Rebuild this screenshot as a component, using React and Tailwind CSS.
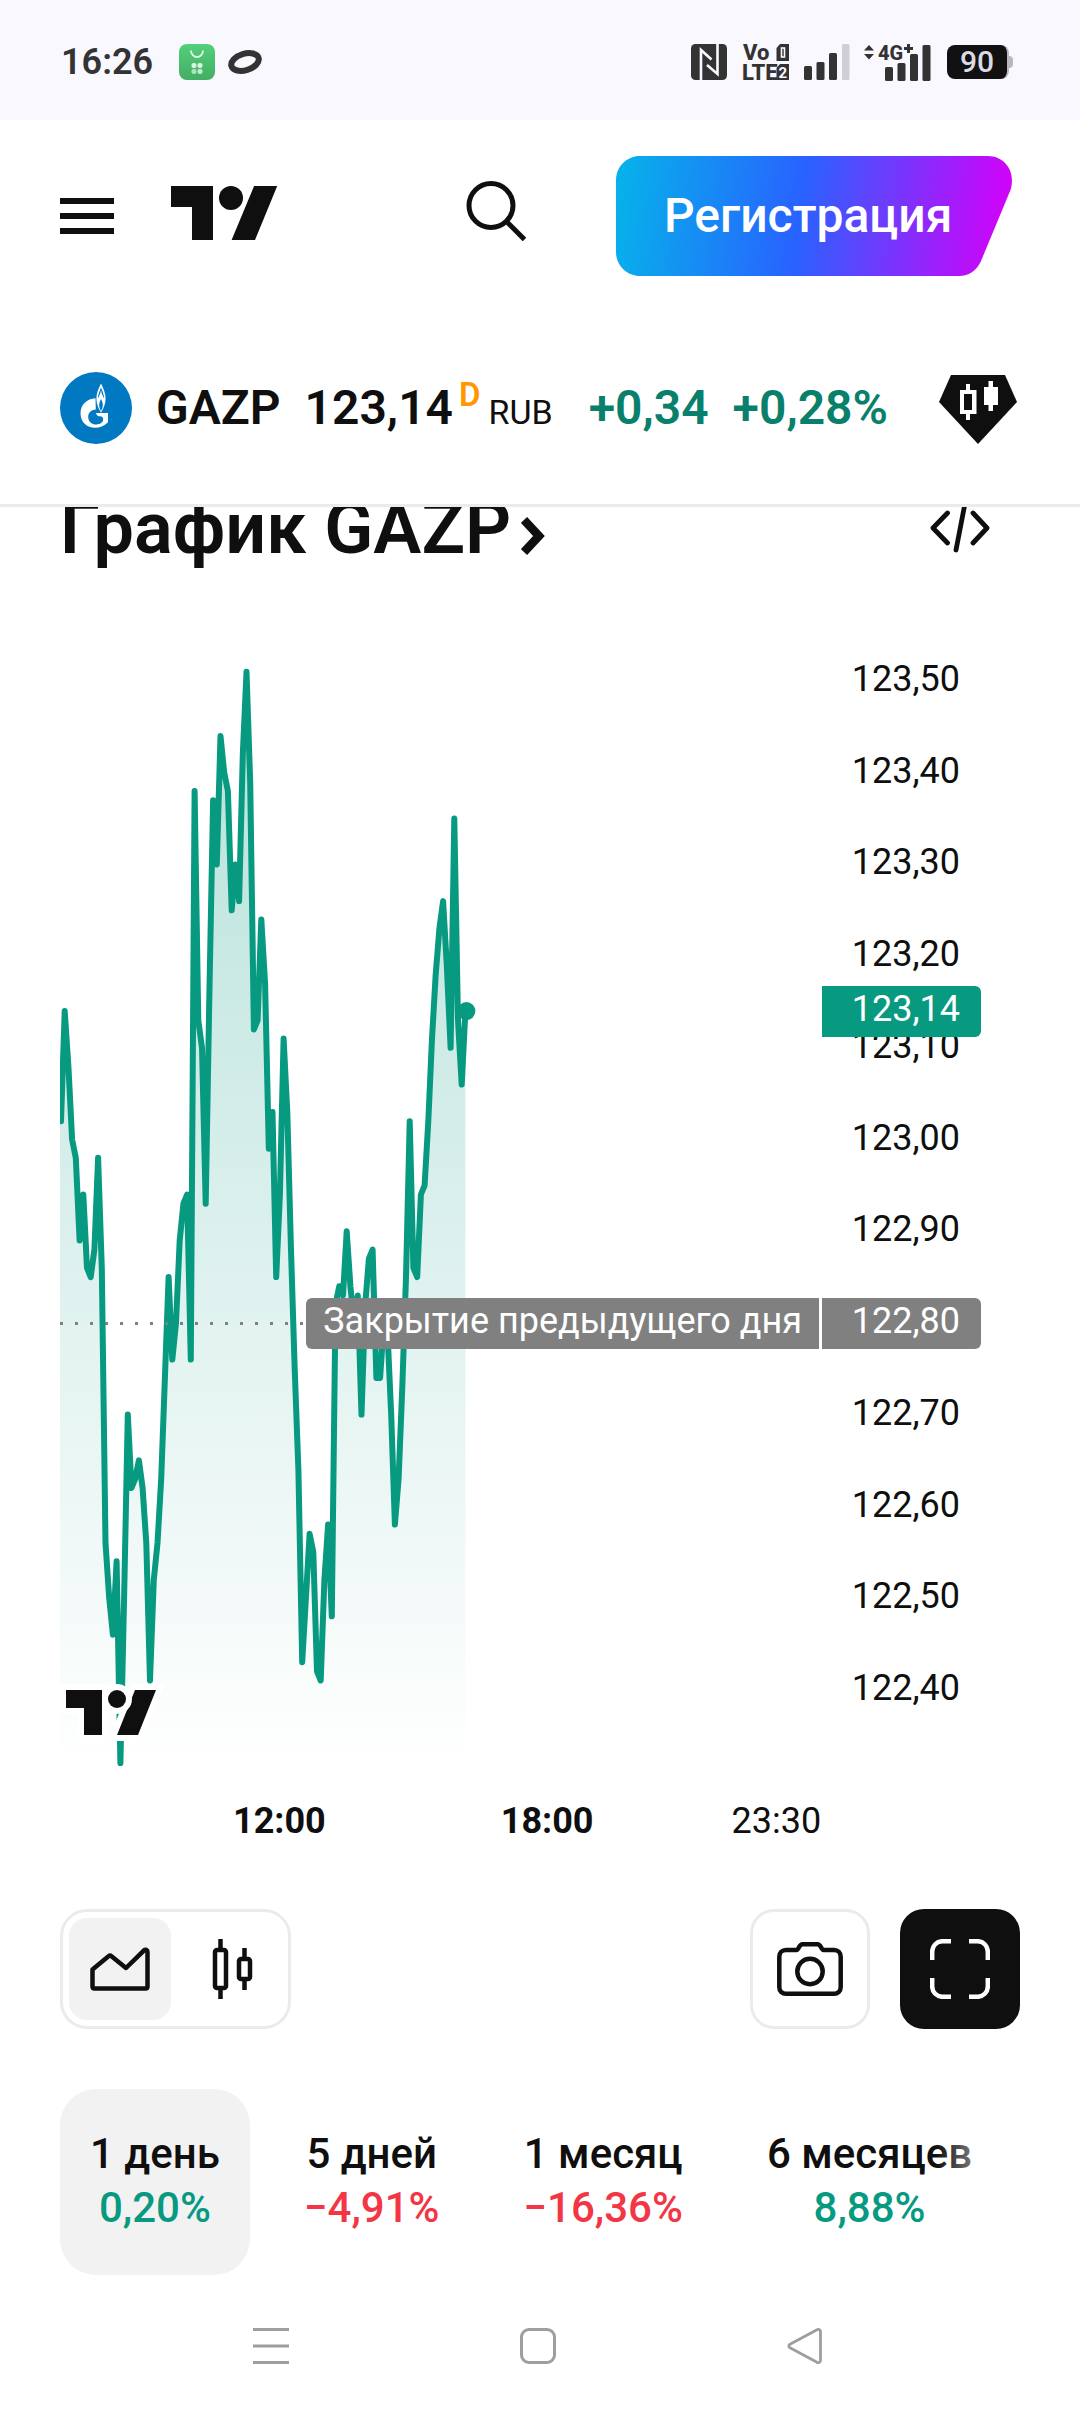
const prices = [
  123.02, 123.14, 123.08, 123.0, 122.98, 122.89, 122.94, 122.86, 122.85, 122.88,
  122.98, 122.86, 122.56, 122.5, 122.46, 122.54, 122.32, 122.5, 122.7, 122.62,
  122.63, 122.65, 122.62, 122.56, 122.41, 122.52, 122.56, 122.63, 122.74, 122.85,
  122.76, 122.8, 122.89, 122.93, 122.94, 122.76, 123.38, 123.13, 123.1, 122.93,
  123.16, 123.37, 123.3, 123.44, 123.4, 123.38, 123.25, 123.3, 123.26, 123.42,
  123.51, 123.39, 123.12, 123.13, 123.24, 123.17, 122.99, 123.03, 122.85, 122.94,
  123.11, 123.03, 122.88, 122.75, 122.64, 122.43, 122.5, 122.57, 122.55, 122.42,
  122.41, 122.52, 122.58, 122.48, 122.82, 122.84, 122.83, 122.9, 122.84, 122.8,
  122.83, 122.7, 122.82, 122.87, 122.88, 122.74, 122.74, 122.8, 122.79, 122.7,
  122.58, 122.63, 122.73, 122.85, 123.02, 122.86, 122.85, 122.94, 122.95, 123.02,
  123.11, 123.18, 123.23, 123.26, 123.19, 123.1, 123.35, 123.13, 123.06, 123.14,
];

const priceTicks = [
  "123,50", "123,40", "123,30", "123,20", "123,10", "123,00",
  "122,90", "122,80", "122,70", "122,60", "122,50", "122,40",
];

const ranges = [
  { id: "1d", label: "1 день", change: "0,20%", up: true },
  { id: "5d", label: "5 дней", change: "−4,91%", up: false },
  { id: "1m", label: "1 месяц", change: "−16,36%", up: false },
  { id: "6m", label: "6 месяцев", change: "8,88%", up: true },
];

const STEP = 3.71;
const toX = (i) => 1 + i * STEP;
const toY = (price) => 50 + (123.5 - price) * 917;

function StatusBar() {
  return (
    <div className="flex h-[120px] items-center bg-[#f9f8ff] pt-1 pr-[67px] pl-[61px] text-[#333]">
      <span className="text-[36px] leading-[36px] font-semibold">16:26</span>
      <svg className="ml-[26px]" width="36" height="36" viewBox="0 0 36 36">
        <defs>
          <linearGradient id="bag" x1="0" y1="0" x2="0" y2="1">
            <stop offset="0" stopColor="#54cf7b" />
            <stop offset="1" stopColor="#43ae62" />
          </linearGradient>
        </defs>
        <rect width="36" height="36" rx="8" fill="url(#bag)" />
        <path d="M12 6.5a6 6.5 0 0 0 12 0" fill="none" stroke="#e4fbe9" strokeWidth="1.8" />
        <g fill="#d9f7e0">
          <rect x="12.500" y="19" width="5" height="5" rx="2" />
          <rect x="18.500" y="19" width="5" height="5" rx="2" />
          <rect x="12.500" y="25" width="5" height="5" rx="2" opacity=".7" />
          <rect x="18.500" y="25" width="5" height="5" rx="2" opacity=".85" />
        </g>
      </svg>
      <svg className="ml-3" width="36" height="36" viewBox="0 0 36 36">
        <ellipse cx="18" cy="18" rx="14.200" ry="8.200" transform="rotate(-17 18 18)" fill="none" stroke="#333" strokeWidth="6" />
      </svg>
      <svg className="ml-auto" width="36" height="36" viewBox="0 0 36 36">
        <rect width="36" height="36" rx="4.500" fill="#333" />
        <path d="M10 36V6l10.500 9.500M26.500 0v30L16 21" fill="none" stroke="#f9f8ff" strokeWidth="2.600" />
      </svg>
      <svg className="ml-4 overflow-visible" width="46" height="36" viewBox="0 0 46 36" fontFamily="Roboto, sans-serif" fontWeight="800" fill="#333">
        <text x="0" y="16" fontSize="22">Vo</text>
        <text x="-1" y="36" fontSize="22">LTE</text>
        <path d="M37 0h9v17H33.500V4z" />
        <path d="M37 20h9v16H33.500V24z" />
        <rect x="38.500" y="4" width="3" height="9" fill="none" stroke="#f9f8ff" strokeWidth="1.600" />
        <text x="35.500" y="33.500" fontSize="15" fontWeight="700" fill="#f9f8ff">2</text>
      </svg>
      <svg className="ml-[15px]" width="46" height="36" viewBox="0 0 46 36" fill="#333">
        <rect y="22" width="8" height="14" rx="1.500" />
        <rect x="12.500" y="18" width="8" height="18" rx="1.500" />
        <rect x="25" y="9" width="8" height="27" rx="1.500" />
        <rect x="38" width="7.500" height="36" rx="1.500" fill="#d2ced6" />
      </svg>
      <svg className="ml-[14px] overflow-visible" width="67" height="37" viewBox="0 -1 67 37" fill="#333">
        <path d="M0 5.500 5 0l5 5.500zM0 9h10l-5 5.500z" />
        <text x="14" y="15" fontSize="20" fontWeight="800" fontFamily="Roboto, sans-serif">4G</text>
        <path d="M40 3.500h9M44.500-1v9" stroke="#333" strokeWidth="3" />
        <rect x="21" y="22" width="8" height="14" rx="1.500" />
        <rect x="33.500" y="18" width="8" height="18" rx="1.500" />
        <rect x="46" y="9" width="8" height="27" rx="1.500" />
        <rect x="58.500" width="8" height="36" rx="1.500" />
      </svg>
      <div className="ml-4 flex items-center">
        <span className="h-[34px] w-[62px] rounded-lg border-r-2 border-[#b9b6be] bg-[#111] text-center text-[30px] leading-[34px] font-medium text-[#dcdae2]">90</span>
        <span className="h-3 w-1 rounded-r-sm bg-[#b9b6be]" />
      </div>
    </div>
  );
}

function BrandLogo() {
  return (
    <svg width="108" height="54" viewBox="0 4 36 18" fill="#0f0f0f">
      <path d="M14 22H7V11H0V4h14v18zM28 22h-7.800L27.700 4h7.700L28 22z" />
      <circle cx="20" cy="8" r="4" />
    </svg>
  );
}

function SiteHeader() {
  return (
    <div className="flex h-[192px] items-center pr-[68px] pl-[60px]">
      <button type="button" aria-label="Меню" className="flex w-[54px] flex-col gap-[9px]">
        <span className="h-[6px] bg-[#0f0f0f]" />
        <span className="h-[6px] bg-[#0f0f0f]" />
        <span className="h-[6px] bg-[#0f0f0f]" />
      </button>
      <a href="#" aria-label="TradingView" className="-mt-[6px] ml-[57px]">
        <BrandLogo />
      </a>
      <button type="button" aria-label="Поиск" className="-mt-[10px] mr-[90px] ml-auto">
        <svg width="60" height="60" viewBox="0 0 60 60" fill="none" stroke="#0f0f0f" strokeWidth="5">
          <circle cx="25" cy="24.500" r="22" />
          <path d="m41 41 17.500 17.500" />
        </svg>
      </button>
      <button type="button" className="relative h-[120px] w-[396px] pl-[48px] text-left text-[48px] font-medium text-white">
        <svg className="absolute inset-0" width="396" height="120" viewBox="0 0 396 120">
          <defs>
            <linearGradient id="cta" gradientUnits="userSpaceOnUse" x1="0" y1="34" x2="392" y2="86">
              <stop offset="0" stopColor="#06b2ea" />
              <stop offset=".47" stopColor="#2962ff" />
              <stop offset="1" stopColor="#d500f9" />
            </linearGradient>
          </defs>
          <path d="M24 0h348c17 0 28 16 22.500 34L365 105c-4 9-12 15-22 15H24C10.700 120 0 109.300 0 96V24C0 10.700 10.700 0 24 0z" fill="url(#cta)" />
        </svg>
        <span className="relative">Регистрация</span>
      </button>
    </div>
  );
}

function GazpromLogo() {
  return (
    <svg width="72" height="72" viewBox="0 0 72 72">
      <circle cx="36" cy="36" r="36" fill="#0079c2" />
      <path d="M35.500 26.200C27 26.700 20.500 32.600 20.500 41.200c0 8.600 6.300 14.600 14.500 14.600 4.600 0 9.200-2 13-5.600V41H35.800c.6 1.600 1.500 2.700 2.800 3.300 2.600-.6 4.600.5 4.600 3 0 3.200-3.200 5.200-6.800 5.200-5 0-8.200-3.400-8.200-7.600 0-4.300 3-7.100 7.600-7.400z" fill="#fff" />
      <path d="M41 11.500c-3 5.800-4.600 10.400-4.600 15.300 0 5 1.800 9 4.600 14 2.800-5 4.600-9 4.600-14 0-4.900-1.600-9.500-4.600-15.300z" fill="#fff" />
      <path d="M41 15.500c-2 4.600-3 7.800-3 11 1.200-2.600 2.400-4.500 3-8.500.6 4 1.800 5.900 3 8.500 0-3.200-1-6.400-3-11zM41 27c-1.300 2.600-1.800 4-1.800 6s.6 3.800 1.800 6.200c1.200-2.400 1.800-4.200 1.800-6.200s-.5-3.400-1.800-6z" fill="#0079c2" />
    </svg>
  );
}

function TickerBar() {
  return (
    <div className="flex h-[192px] items-center pr-[63px] pl-[60px] font-semibold whitespace-nowrap">
      <GazpromLogo />
      <span className="ml-6 text-[48px]">GAZP</span>
      <div className="ml-6 flex items-baseline">
        <span className="text-[48px]">123,14</span>
        <sup className="relative -top-[18px] ml-[6px] text-[33px] leading-none text-[#ff9800]">D</sup>
        <span className="ml-2 text-[34px] font-normal">RUB</span>
      </div>
      <span className="ml-[36px] text-[48px] text-[#08806b]">+0,34</span>
      <span className="ml-6 text-[48px] text-[#08806b]">+0,28%</span>
      <button type="button" aria-label="Суперграфики" className="ml-auto">
        <svg width="78" height="72" viewBox="0 0 78 72">
          <path d="M12 3h54l12 27-39 42L0 30z" fill="#0f0f0f" />
          <path d="M27 12h4v6h6.500v24H31v6h-4v-6h-6V18h6zM49.500 9h4.500v6h5v18h-5v6h-4.500v-6H45V15h4.500z" fill="#fff" />
          <path d="M25 22h8v16h-8z" fill="#0f0f0f" />
        </svg>
      </button>
    </div>
  );
}

function PriceChart() {
  const points = prices.map((price, i) => `${toX(i).toFixed(1)},${toY(price).toFixed(1)}`).join(" ");
  const lastX = toX(prices.length - 1);
  const lastY = toY(prices[prices.length - 1]);

  return (
    <section className="relative mt-[42px] pr-[99px] pl-[60px] text-[36px]">
      <div className="flex">
        <div className="relative h-[1140px] min-w-0 flex-1 overflow-hidden">
          <svg className="h-full w-full" viewBox="0 0 762 1140" preserveAspectRatio="xMinYMin slice">
            <defs>
              <linearGradient id="area" gradientUnits="userSpaceOnUse" x1="0" y1="17" x2="0" y2="1140">
                <stop offset="0" stopColor="#089981" stopOpacity=".3" />
                <stop offset="1" stopColor="#089981" stopOpacity="0" />
              </linearGradient>
            </defs>
            <polygon points={`0,${toY(prices[0])} ${points} ${lastX},1140 0,1140`} fill="url(#area)" />
            <polyline points={points} fill="none" stroke="#089981" strokeWidth="6" strokeLinecap="round" strokeLinejoin="round" />
            <circle cx={lastX + 1} cy={lastY} r="9" fill="#089981" />
            <path d="M0 692.500H250" stroke="#808080" strokeWidth="3" strokeDasharray="3 12" />
            <g transform="translate(6 1059)" fill="#0f0f0f" stroke="#fff" strokeWidth="12" paintOrder="stroke">
              <path d="M0 0h36v45H18V18H0zM69 0h21L72 45H51z" />
              <circle cx="51" cy="9" r="9" />
            </g>
          </svg>
        </div>
        <div className="flex h-[1103px] w-[159px] flex-col pt-[2px] pr-[21px] text-right">
          {priceTicks.map((tick) => (
            <span key={tick} className="flex flex-1 items-center justify-end">{tick}</span>
          ))}
        </div>
      </div>
      <div className="absolute top-[355px] right-[99px] h-[51px] w-[159px] rounded-r-md bg-[#089981] pr-[21px] text-right leading-[46px] text-white">
        123,14
      </div>
      <div className="absolute top-[667px] right-[99px] flex h-[51px] gap-[3px] leading-[46px] text-white">
        <span className="rounded-l-md bg-[#808080] px-[17px]">Закрытие предыдущего дня</span>
        <span className="w-[159px] rounded-r-md bg-[#808080] pr-[21px] text-right">122,80</span>
      </div>
      <div className="flex h-[98px] items-center pt-[2px] pl-[173px]">
        <span className="font-bold">12:00</span>
        <span className="ml-[175px] font-bold">18:00</span>
        <span className="ml-[138px]">23:30</span>
      </div>
    </section>
  );
}

function ChartControls() {
  return (
    <div className="mt-10 flex h-[120px] items-center px-[60px]">
      <div className="flex h-[120px] gap-[9px] rounded-[27px] border-3 border-[#ebebeb] p-[6px]">
        <button type="button" aria-label="Область" className="grid w-[102px] place-items-center rounded-[18px] bg-[#f2f2f2]">
          <svg width="60" height="60" viewBox="0 0 60 60" fill="none" stroke="#0f0f0f" strokeWidth="4.500" strokeLinejoin="round">
            <path d="M2.500 30.500v17c0 1.300.7 2 2 2h51c1.300 0 2-.7 2-2V13c0-2.300-2-3-3.600-1.500L36 29 21.500 17.200c-1-.8-2-.8-3 0z" />
          </svg>
        </button>
        <button type="button" aria-label="Свечи" className="grid w-[102px] place-items-center rounded-[18px]">
          <svg width="60" height="60" viewBox="0 0 60 60" fill="none" stroke="#0f0f0f" strokeWidth="4.500">
            <rect x="14" y="11" width="11" height="38" rx="2" />
            <rect x="38" y="20" width="11" height="20" rx="2" />
            <path d="M19.500 0v11M19.500 49v11M43.500 9v11M43.500 40v11" />
          </svg>
        </button>
      </div>
      <button type="button" aria-label="Сделать снимок" className="ml-auto grid size-[120px] place-items-center rounded-[24px] border-3 border-[#ebebeb]">
        <svg width="66" height="54" viewBox="0 0 66 54" fill="none" stroke="#0f0f0f" strokeWidth="4.500">
          <path d="M9 8h10.500c2.500 0 2.300-5.700 6-5.700h15c3.700 0 3.500 5.700 6 5.700H57c4 0 6.700 2.700 6.700 6.700V45c0 4-2.700 6.700-6.700 6.700H9c-4 0-6.700-2.700-6.700-6.700V14.700C2.300 10.700 5 8 9 8z" />
          <circle cx="33" cy="29.500" r="12.700" />
        </svg>
      </button>
      <button type="button" aria-label="Во весь экран" className="ml-[30px] grid size-[120px] place-items-center rounded-[24px] bg-[#0f0f0f]">
        <svg width="60" height="60" viewBox="0 0 60 60" fill="none" stroke="#fff" strokeWidth="4.500">
          <path d="M21 2.200h-8.500A10.300 10.300 0 0 0 2.200 12.500V21M39 2.200h8.500a10.300 10.300 0 0 1 10.300 10.300V21M57.800 39v8.500a10.300 10.300 0 0 1-10.300 10.300H39M21 57.800h-8.500A10.300 10.300 0 0 1 2.200 47.500V39" />
        </svg>
      </button>
    </div>
  );
}

function RangeTabs() {
  return (
    <div className="relative mx-[60px] mt-[60px] flex gap-6 overflow-hidden">
      {ranges.map((range) => (
        <button key={range.id} type="button"
          className={`flex h-[186px] shrink-0 flex-col items-center justify-center rounded-[36px] px-[30px] pb-[2px] text-[42px] leading-[54px] font-medium ${range.id === "1d" ? "bg-[#f2f2f2]" : ""}`}>
          <span>{range.label}</span>
          <span className={range.up ? "text-[#089981]" : "text-[#f23645]"}>{range.change}</span>
        </button>
      ))}
      <div className="pointer-events-none absolute inset-y-0 right-0 w-[84px] bg-gradient-to-r from-transparent to-white" />
    </div>
  );
}

function SystemNav() {
  return (
    <nav className="mt-[5px] grid h-[132px] grid-cols-3 place-items-center pr-[142px] pl-[138px]">
      <button type="button" aria-label="Недавние">
        <svg width="36" height="36" viewBox="0 0 36 36" stroke="#9e9e9e" strokeWidth="3">
          <path d="M0 1.500h36M0 18h36M0 34.500h36" />
        </svg>
      </button>
      <button type="button" aria-label="Домой" className="size-[36px] rounded-[9px] border-3 border-[#9e9e9e]" />
      <button type="button" aria-label="Назад">
        <svg width="36" height="36" viewBox="0 0 36 36" fill="none" stroke="#9e9e9e" strokeWidth="2.800" strokeLinejoin="round">
          <path d="M30 1.800 3 16.200c-1.500.9-1.500 2.700 0 3.600L30 34.200c2 1 3.500 0 3.500-2V3.800c0-2-1.500-3-3.500-2z" />
        </svg>
      </button>
    </nav>
  );
}

export default function App() {
  return (
    <div className="min-h-screen overflow-hidden bg-white font-['Roboto',sans-serif] text-[#0f0f0f]">
      <header className="relative z-10 border-b-3 border-[#ebebeb] bg-white">
        <StatusBar />
        <SiteHeader />
        <TickerBar />
      </header>
      <main className="-mt-[38px]">
        <div className="flex h-[120px] items-center justify-between px-[60px]">
          <h2 className="text-[72px] leading-[120px] font-semibold">
            <a href="#" className="flex items-center gap-[10px]">
              График GAZP
              <svg className="mt-[13px]" width="24" height="40" viewBox="0 0 24 40" fill="none" stroke="#0f0f0f" strokeWidth="8.500">
                <path d="m3 4 15 16L3 36" />
              </svg>
            </a>
          </h2>
          <button type="button" aria-label="Код для встраивания" className="grid size-[120px] place-items-center">
            <svg width="60" height="50" viewBox="0 0 60 50" fill="none" stroke="#0f0f0f" strokeWidth="4.800" strokeLinecap="round" strokeLinejoin="round">
              <path d="M17.500 9 3 24l14.500 15M43 9l14 15-14 15M34.500 2l-8.500 44" />
            </svg>
          </button>
        </div>
        <PriceChart />
        <ChartControls />
        <RangeTabs />
      </main>
      <SystemNav />
    </div>
  );
}
